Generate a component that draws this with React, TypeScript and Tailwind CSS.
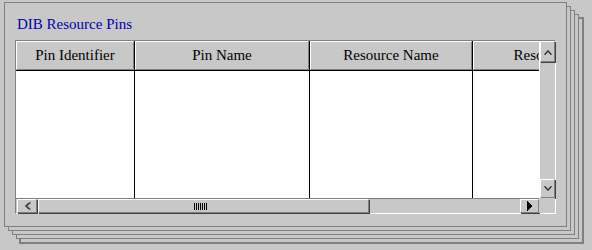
import React from 'react'

const serif = { fontFamily: '"Liberation Serif", "Times New Roman", serif' }

function Btn({ children, className = '' }: { children?: React.ReactNode; className?: string }) {
  return (
    <div className={`flex items-center justify-center bg-[#c8c8c8] border border-t-white border-l-white border-r-[#808080] border-b-[#808080] shadow-[1px_1px_0_0_#404040] ${className}`}>
      {children}
    </div>
  )
}

function Arrow({ dir }: { dir: 'up' | 'down' | 'left' | 'right' }) {
  if (dir === 'right')
    return (
      <svg width="6" height="10" viewBox="0 0 6 10" shapeRendering="crispEdges">
        <polygon points="0,0 6,5 0,10" fill="#000" />
      </svg>
    )
  const pts = {
    up: '0.5,5.5 4,1.5 7.5,5.5',
    down: '0.5,0.5 4,4.5 7.5,0.5',
    left: '5.5,0.5 1.5,4 5.5,7.5',
  }[dir]
  const w = dir === 'left' ? 7 : 8
  const h = dir === 'left' ? 8 : 6
  return (
    <svg width={w} height={h} viewBox={`0 0 ${w} ${h}`}>
      <polyline points={pts} fill="none" stroke="#000" strokeWidth="1" />
      <polyline points={pts} fill="none" stroke="#000" strokeWidth="1" transform={dir === 'left' ? 'translate(1.5,0)' : dir === 'up' ? 'translate(0,1)' : 'translate(0,-1)'} opacity="0.6" />
    </svg>
  )
}

const cols = [
  { label: 'Pin Identifier', w: 'w-[118px]' },
  { label: 'Pin Name', w: 'w-[174px]' },
  { label: 'Resource Name', w: 'w-[162px]' },
  { label: 'Resource Type', w: 'w-[170px]' },
]

export default function App() {
  return (
    <div className="w-[592px] h-[250px] bg-[#c8c8c8] pt-[2px] pl-[4px] overflow-hidden" style={serif}>
      <div className="w-[563px] h-[225px] border border-[#808080] bg-[#c8c8c8] pl-[10px] pt-[12px] shadow-[4px_4px_0_-1px_#c8c8c8,4px_4px_0_0_#808080,8px_8px_0_-1px_#c8c8c8,8px_8px_0_0_#808080,12px_12px_0_-1px_#c8c8c8,12px_12px_0_0_#808080,16px_16px_0_-1px_#c8c8c8,16px_16px_0_1px_#808080]">
        <div className="pl-[2px] text-[15px] leading-[18px] text-[#0000a8]">DIB Resource Pins</div>

        <div className="mt-[7px] w-[541px] h-[174px] border border-t-[#808080] border-l-[#808080] border-r-white border-b-white grid grid-cols-[523px_16px] grid-rows-[157px_15px]">
          {/* table area */}
          <div className="flex flex-col overflow-hidden">
            <div className="flex h-[30px] shrink-0 border-b border-black">
              {cols.map((c, i) => (
                <React.Fragment key={c.label}>
                  <div className={`${c.w} shrink-0 h-full bg-[#c8c8c8] border border-t-white border-l-white border-r-[#808080] border-b-[#808080] flex items-center justify-center text-[15px] text-black whitespace-nowrap overflow-hidden`}>
                    {c.label}
                  </div>
                  {i < cols.length - 1 && <div className="w-px shrink-0 bg-black" />}
                </React.Fragment>
              ))}
            </div>
            <div className="flex flex-1 bg-white">
              {cols.map((c, i) => (
                <React.Fragment key={c.label}>
                  <div className={`${c.w} shrink-0`} />
                  {i < cols.length - 1 && <div className="w-px shrink-0 bg-black" />}
                </React.Fragment>
              ))}
            </div>
          </div>

          {/* vertical scrollbar */}
          <div className="flex flex-col bg-[#c8c8c8] border-l border-white">
            <Btn className="h-[21px] w-[15px] shrink-0"><Arrow dir="up" /></Btn>
            <div className="flex-1" />
            <Btn className="h-[19px] w-[15px] shrink-0"><Arrow dir="down" /></Btn>
          </div>

          {/* horizontal scrollbar */}
          <div className="flex bg-[#c8c8c8] border-t border-[#808080] pl-px">
            <Btn className="w-[20px] h-full shrink-0"><Arrow dir="left" /></Btn>
            <Btn className="w-[331px] h-full shrink-0 ml-px">
              <svg width="13" height="7" viewBox="0 0 13 7" shapeRendering="crispEdges" className="mr-[6px]">
                {[0, 2, 4, 6, 8, 10, 12].map(x => (
                  <rect key={x} x={x} y="0" width="1" height="7" fill="#000" />
                ))}
              </svg>
            </Btn>
            <div className="flex-1" />
            <Btn className="w-[19px] h-full shrink-0"><Arrow dir="right" /></Btn>
          </div>

          {/* corner */}
          <div className="bg-[#c8c8c8]" />
        </div>
      </div>
    </div>
  )
}
